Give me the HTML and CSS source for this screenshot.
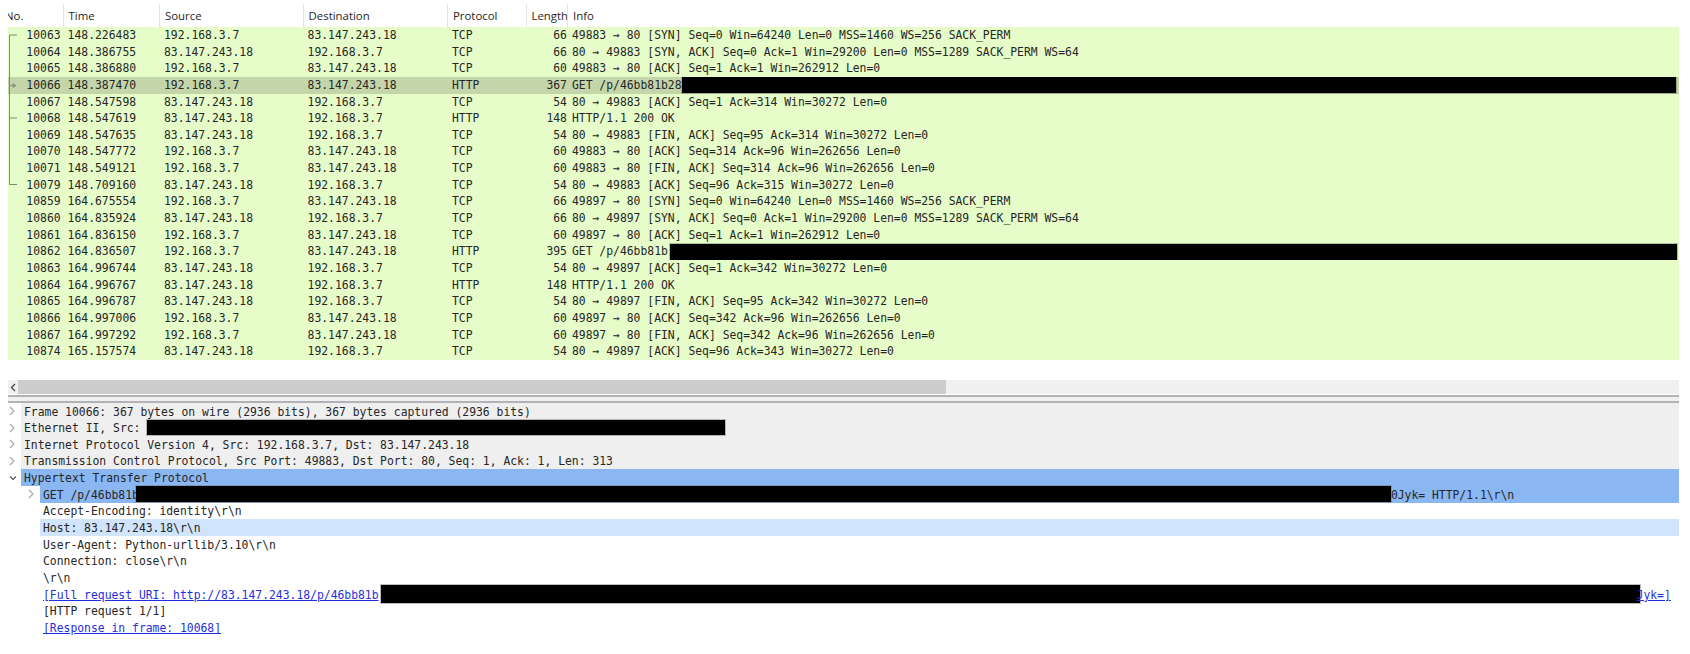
FILE: index.html
```html
<!DOCTYPE html>
<html lang="en">
<head>
<meta charset="utf-8">
<title>Packet capture</title>
<link rel="stylesheet" href="styles.css">
</head>
<body>
<div class="app">
  <div class="head">
    <div class="hc hc-no">No.</div><div class="hc">Time</div><div class="hc">Source</div><div class="hc">Destination</div><div class="hc">Protocol</div><div class="hc hc-len">Length</div><div class="hc hc-last">Info</div>
  </div>
  <div class="list">
    <svg class="tree" width="10" height="160" viewBox="0 0 10 160" aria-hidden="true">
      <path d="M1.5 8V157.5M1.5 8H9M1.5 91H9M1.5 157.5H9" fill="none" stroke="#7b8a72" stroke-width="1"/>
      <path d="M1 58.5H7M5 56.5l3 2-3 2z" fill="#8d9a80" stroke="#8d9a80" stroke-width="1"/>
    </svg>
    <div class="row"><span class="no">10063</span><span>148.226483</span><span>192.168.3.7</span><span>83.147.243.18</span><span>TCP</span><span class="len">66</span><span class="info">49883 → 80 [SYN] Seq=0 Win=64240 Len=0 MSS=1460 WS=256 SACK_PERM</span></div>
    <div class="row"><span class="no">10064</span><span>148.386755</span><span>83.147.243.18</span><span>192.168.3.7</span><span>TCP</span><span class="len">66</span><span class="info">80 → 49883 [SYN, ACK] Seq=0 Ack=1 Win=29200 Len=0 MSS=1289 SACK_PERM WS=64</span></div>
    <div class="row"><span class="no">10065</span><span>148.386880</span><span>192.168.3.7</span><span>83.147.243.18</span><span>TCP</span><span class="len">60</span><span class="info">49883 → 80 [ACK] Seq=1 Ack=1 Win=262912 Len=0</span></div>
    <div class="row row-sel"><span class="no">10066</span><span>148.387470</span><span>192.168.3.7</span><span>83.147.243.18</span><span>HTTP</span><span class="len">367</span><span class="info info-flex"><span>GET /p/46bb81b28</span><i class="bar bar-r4"></i></span></div>
    <div class="row"><span class="no">10067</span><span>148.547598</span><span>83.147.243.18</span><span>192.168.3.7</span><span>TCP</span><span class="len">54</span><span class="info">80 → 49883 [ACK] Seq=1 Ack=314 Win=30272 Len=0</span></div>
    <div class="row"><span class="no">10068</span><span>148.547619</span><span>83.147.243.18</span><span>192.168.3.7</span><span>HTTP</span><span class="len">148</span><span class="info">HTTP/1.1 200 OK</span></div>
    <div class="row"><span class="no">10069</span><span>148.547635</span><span>83.147.243.18</span><span>192.168.3.7</span><span>TCP</span><span class="len">54</span><span class="info">80 → 49883 [FIN, ACK] Seq=95 Ack=314 Win=30272 Len=0</span></div>
    <div class="row"><span class="no">10070</span><span>148.547772</span><span>192.168.3.7</span><span>83.147.243.18</span><span>TCP</span><span class="len">60</span><span class="info">49883 → 80 [ACK] Seq=314 Ack=96 Win=262656 Len=0</span></div>
    <div class="row"><span class="no">10071</span><span>148.549121</span><span>192.168.3.7</span><span>83.147.243.18</span><span>TCP</span><span class="len">60</span><span class="info">49883 → 80 [FIN, ACK] Seq=314 Ack=96 Win=262656 Len=0</span></div>
    <div class="row"><span class="no">10079</span><span>148.709160</span><span>83.147.243.18</span><span>192.168.3.7</span><span>TCP</span><span class="len">54</span><span class="info">80 → 49883 [ACK] Seq=96 Ack=315 Win=30272 Len=0</span></div>
    <div class="row"><span class="no">10859</span><span>164.675554</span><span>192.168.3.7</span><span>83.147.243.18</span><span>TCP</span><span class="len">66</span><span class="info">49897 → 80 [SYN] Seq=0 Win=64240 Len=0 MSS=1460 WS=256 SACK_PERM</span></div>
    <div class="row"><span class="no">10860</span><span>164.835924</span><span>83.147.243.18</span><span>192.168.3.7</span><span>TCP</span><span class="len">66</span><span class="info">80 → 49897 [SYN, ACK] Seq=0 Ack=1 Win=29200 Len=0 MSS=1289 SACK_PERM WS=64</span></div>
    <div class="row"><span class="no">10861</span><span>164.836150</span><span>192.168.3.7</span><span>83.147.243.18</span><span>TCP</span><span class="len">60</span><span class="info">49897 → 80 [ACK] Seq=1 Ack=1 Win=262912 Len=0</span></div>
    <div class="row"><span class="no">10862</span><span>164.836507</span><span>192.168.3.7</span><span>83.147.243.18</span><span>HTTP</span><span class="len">395</span><span class="info info-flex"><span>GET /p/46bb81b</span><i class="bar bar-r14"></i></span></div>
    <div class="row"><span class="no">10863</span><span>164.996744</span><span>83.147.243.18</span><span>192.168.3.7</span><span>TCP</span><span class="len">54</span><span class="info">80 → 49897 [ACK] Seq=1 Ack=342 Win=30272 Len=0</span></div>
    <div class="row"><span class="no">10864</span><span>164.996767</span><span>83.147.243.18</span><span>192.168.3.7</span><span>HTTP</span><span class="len">148</span><span class="info">HTTP/1.1 200 OK</span></div>
    <div class="row"><span class="no">10865</span><span>164.996787</span><span>83.147.243.18</span><span>192.168.3.7</span><span>TCP</span><span class="len">54</span><span class="info">80 → 49897 [FIN, ACK] Seq=95 Ack=342 Win=30272 Len=0</span></div>
    <div class="row"><span class="no">10866</span><span>164.997006</span><span>192.168.3.7</span><span>83.147.243.18</span><span>TCP</span><span class="len">60</span><span class="info">49897 → 80 [ACK] Seq=342 Ack=96 Win=262656 Len=0</span></div>
    <div class="row"><span class="no">10867</span><span>164.997292</span><span>192.168.3.7</span><span>83.147.243.18</span><span>TCP</span><span class="len">60</span><span class="info">49897 → 80 [FIN, ACK] Seq=342 Ack=96 Win=262656 Len=0</span></div>
    <div class="row"><span class="no">10874</span><span>165.157574</span><span>83.147.243.18</span><span>192.168.3.7</span><span>TCP</span><span class="len">54</span><span class="info">80 → 49897 [ACK] Seq=96 Ack=343 Win=30272 Len=0</span></div>
  </div>

  <div class="hscroll">
    <div class="hs-arrow"><svg width="6" height="9" viewBox="0 0 6 9" aria-hidden="true"><path d="M5 1L1.5 4.5L5 8" fill="none" stroke="#444" stroke-width="1.3"/></svg></div>
    <div class="hs-thumb"></div>
  </div>
  <div class="split"></div>

  <div class="tree-pane">
    <div class="d d0"><svg class="chev" width="6" height="10" viewBox="0 0 6 10" aria-hidden="true"><path d="M1 1l4 4-4 4" fill="none" stroke="#a8a8a8" stroke-width="1.2"/></svg><div class="dt dt-gray"><span>Frame 10066: 367 bytes on wire (2936 bits), 367 bytes captured (2936 bits)</span></div></div>
    <div class="d d0"><svg class="chev" width="6" height="10" viewBox="0 0 6 10" aria-hidden="true"><path d="M1 1l4 4-4 4" fill="none" stroke="#a8a8a8" stroke-width="1.2"/></svg><div class="dt dt-gray"><span>Ethernet II, Src:</span><i class="bar bar-eth"></i></div></div>
    <div class="d d0"><svg class="chev" width="6" height="10" viewBox="0 0 6 10" aria-hidden="true"><path d="M1 1l4 4-4 4" fill="none" stroke="#a8a8a8" stroke-width="1.2"/></svg><div class="dt dt-gray"><span>Internet Protocol Version 4, Src: 192.168.3.7, Dst: 83.147.243.18</span></div></div>
    <div class="d d0"><svg class="chev" width="6" height="10" viewBox="0 0 6 10" aria-hidden="true"><path d="M1 1l4 4-4 4" fill="none" stroke="#a8a8a8" stroke-width="1.2"/></svg><div class="dt dt-gray"><span>Transmission Control Protocol, Src Port: 49883, Dst Port: 80, Seq: 1, Ack: 1, Len: 313</span></div></div>
    <div class="d d0"><svg class="chev chev-open" width="8" height="6" viewBox="0 0 8 6" aria-hidden="true"><path d="M1 1.5l3 3 3-3" fill="none" stroke="#555" stroke-width="1.2"/></svg><div class="dt dt-blue"><span>Hypertext Transfer Protocol</span></div></div>
    <div class="d d1"><svg class="chev" width="6" height="10" viewBox="0 0 6 10" aria-hidden="true"><path d="M1 1l4 4-4 4" fill="none" stroke="#a8a8a8" stroke-width="1.2"/></svg><div class="dt dt-blue"><span>GET /p/46bb81b</span><i class="bar bar-get"></i><span class="after">0Jyk= HTTP/1.1\r\n</span></div></div>
    <div class="d d1"><div class="dt"><span>Accept-Encoding: identity\r\n</span></div></div>
    <div class="d d1"><div class="dt dt-light"><span>Host: 83.147.243.18\r\n</span></div></div>
    <div class="d d1"><div class="dt"><span>User-Agent: Python-urllib/3.10\r\n</span></div></div>
    <div class="d d1"><div class="dt"><span>Connection: close\r\n</span></div></div>
    <div class="d d1"><div class="dt"><span>\r\n</span></div></div>
    <div class="d d1"><div class="dt"><span class="link">[Full request URI: http://83.147.243.18/p/46bb81b</span><i class="bar bar-uri"></i><span class="link after-uri">Jyk=]</span></div></div>
    <div class="d d1"><div class="dt"><span>[HTTP request 1/1]</span></div></div>
    <div class="d d1"><div class="dt"><span class="link">[Response in frame: 10068]</span></div></div>
  </div>
</div>
</body>
</html>
```
FILE: styles.css
```css
* { box-sizing: border-box; }

html, body {
  margin: 0;
  padding: 0;
  background: #fff;
}

.app {
  width: 1690px;
  height: 654px;
  padding: 0 11px 0 8px;
  overflow: hidden;
  color: #262626;
  font-family: "DejaVu Sans Mono", "Liberation Mono", monospace;
  font-size: 11.38px;
}

/* packet list */
.head,
.row {
  display: grid;
  grid-template-columns: 55.6px 96.4px 143.6px 144.4px 79.5px 40.5px 1fr;
}

.head {
  height: 27px;
  padding-top: 4px;
  font-family: "Open Sans", "Noto Sans", sans-serif;
  font-size: 11.4px;
}

.hc {
  padding: 4px 0 0 5px;
  border-right: 1px solid #e3e3e3;
  line-height: 16px;
  overflow: hidden;
  white-space: nowrap;
}

.hc-no { padding-left: 0; text-indent: -3px; }
.hc-len { padding-left: 4px; }
.hc-last { border-right: 0; }

.list { position: relative; }

.tree {
  position: absolute;
  left: 0;
  top: 0;
}

.row {
  height: 16.65px;
  line-height: 16.65px;
  background: #e6fdc9;
  white-space: pre;
}

.row > span { padding-left: 4px; overflow: hidden; }
.row > .no { padding: 0 3px 0 0; text-align: right; }
.row > .len { padding: 0 1px 0 0; text-align: right; }
.row-sel { background: #c4d5aa; }

.info-flex { display: flex; align-items: center; }

/* redaction bars */
.bar {
  display: block;
  flex: none;
  height: 16px;
  background: #000;
  box-shadow: 0 0 0 1px rgba(110, 110, 110, .45);
}

.bar-r4 { width: 994px; }
.bar-r14 { width: 1007px; margin-left: 2px; }
.bar-eth { width: 578px; margin-left: 7px; height: 15px; }
.bar-get { width: 1255px; margin-left: -3px; }
.bar-uri { width: 1259px; margin-left: 2px; height: 18px; }

/* horizontal scrollbar */
.hscroll {
  display: flex;
  height: 14.5px;
  margin-top: 20px;
  background: #f0f0f0;
}

.hs-arrow {
  display: flex;
  align-items: center;
  justify-content: center;
  width: 10px;
}

.hs-thumb { width: 928px; background: #cdcdcd; }

.split {
  height: 8px;
  margin-top: .5px;
  background: #f0f0f0;
  border-top: 2px solid #b2b2b6;
  border-bottom: 2px solid #b2b2b6;
}

/* details tree */
.d {
  display: flex;
  align-items: center;
  height: 16.67px;
  line-height: 16.67px;
  white-space: pre;
}

.d0 { padding-left: 13px; }
.d1 { padding-left: 32px; }

.chev { flex: none; }
.d0 .chev { margin-left: -12px; margin-right: 6px; }
.d0 .chev-open { margin-right: 4px; }
.d1 .chev { margin-left: -12px; margin-right: 6px; }

.dt {
  display: flex;
  align-items: center;
  flex: 1;
  height: 100%;
  padding-left: 3px;
}

.dt > span { padding-top: 1.4px; }

.dt-gray { background: #efefef; }
.dt-blue { background: #8ab6f2; }
.dt-light { background: #d0e4fb; }

.link {
  color: #1f2fe0;
  text-decoration: underline;
}

.after-uri { margin-left: -3px; }
```
